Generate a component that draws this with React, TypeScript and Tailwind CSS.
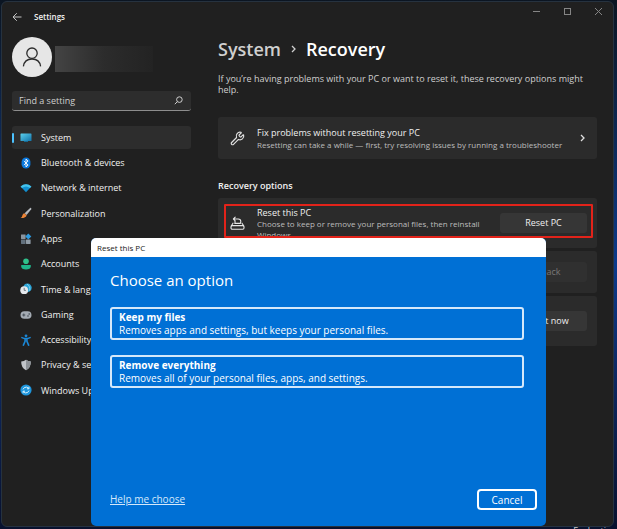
import { useState, type ReactNode } from 'react';
import { Wrench } from 'lucide-react';

const navItems: { label: string; icon: ReactNode }[] = [
  {
    label: 'System',
    icon: (
      <>
        <defs>
          <linearGradient id="sys" x1="0" y1="0" x2="1" y2="1">
            <stop offset="0" stopColor="#5cd0ee" />
            <stop offset="1" stopColor="#1273a8" />
          </linearGradient>
        </defs>
        <rect x="0.5" y="1.5" width="11" height="7.5" rx="0.6" fill="url(#sys)" />
        <path d="M4 9h4v1H4z" fill="#17678f" />
      </>
    ),
  },
  {
    label: 'Bluetooth & devices',
    icon: (
      <>
        <rect x="1.6" y="0.4" width="8.8" height="11.2" rx="4.4" fill="#0a78dd" />
        <path d="M3.9 4l4.2 4L6 9.9V2.1L8.1 4 3.9 8" fill="none" stroke="#fff" strokeWidth="0.9" />
      </>
    ),
  },
  {
    label: 'Network & internet',
    icon: (
      <>
        <path d="M0.6 4.6Q6 -0.2 11.4 4.6L6 10.2z" fill="#118fd0" />
        <path d="M0.6 4.6Q6 -0.2 11.4 4.6L10 6Q6 2.8 2 6z" fill="#46c3ea" />
      </>
    ),
  },
  {
    label: 'Personalization',
    icon: (
      <>
        <path d="M10.4 0.8Q11.8 0.8 11.2 2.2L6.6 8 4.6 6.2z" fill="#b4b8bd" />
        <path d="M4.4 6.2L6.6 8.2Q6 11.2 0.6 11 2.2 10.2 2.4 8.2 3 6.4 4.4 6.2z" fill="#ec8437" />
      </>
    ),
  },
  {
    label: 'Apps',
    icon: (
      <>
        <rect x="1" y="1.4" width="4.6" height="4.6" rx="0.4" fill="#8a949e" />
        <rect x="1" y="6.4" width="4.6" height="4.6" rx="0.4" fill="#62707d" />
        <rect x="6" y="6.4" width="4.6" height="4.6" rx="0.4" fill="#8f9ba6" />
        <path d="M8.3 0.4l3 3-3 3-3-3z" fill="#2d9be0" />
      </>
    ),
  },
  {
    label: 'Accounts',
    icon: (
      <>
        <circle cx="6" cy="3.3" r="2.8" fill="#2fc08b" />
        <path d="M1.2 7h9.6v1.4Q10.6 11.4 6 11.4T1.2 8.4z" fill="#1fb48a" />
      </>
    ),
  },
  {
    label: 'Time & language',
    icon: (
      <>
        <circle cx="7.4" cy="4.8" r="4.3" fill="#2ba5d8" />
        <path d="M7 1.2Q10.6 3 9.6 7.8" fill="none" stroke="#8fdcf4" strokeWidth="0.8" />
        <circle cx="4.2" cy="7.2" r="3.9" fill="#e4e8ec" />
        <path d="M4.2 4.8v2.6h1.7" fill="none" stroke="#53616c" strokeWidth="0.8" />
      </>
    ),
  },
  {
    label: 'Gaming',
    icon: (
      <>
        <rect x="0.5" y="2.2" width="11" height="7.6" rx="3.8" fill="#a4abb3" />
        <path d="M2.3 6h3M3.8 4.5v3" stroke="#3e464e" strokeWidth="0.9" />
        <circle cx="8" cy="7" r="0.8" fill="#3e464e" />
        <circle cx="9.2" cy="5" r="0.8" fill="#3e464e" />
      </>
    ),
  },
  {
    label: 'Accessibility',
    icon: (
      <g stroke="#1b87d6" fill="none" strokeLinecap="round" strokeLinejoin="round">
        <circle cx="6" cy="1.8" r="1.4" fill="#1b87d6" stroke="none" />
        <path d="M1.9 3.6Q6 5.4 10.1 3.6" strokeWidth="1.5" />
        <path d="M5.1 4.8v2.4L3.4 11.1M6.9 4.8v2.4l1.7 3.9" strokeWidth="1.6" />
      </g>
    ),
  },
  {
    label: 'Privacy & security',
    icon: (
      <>
        <path d="M6 0.8Q8 2.4 10.8 2.4 11 8.6 6 11.2 1 8.6 1.2 2.4 4 2.4 6 0.8z" fill="#c0c4c8" />
        <path d="M6 0.8Q8 2.4 10.8 2.4 11 8.6 6 11.2z" fill="#8d9297" />
      </>
    ),
  },
  {
    label: 'Windows Update',
    icon: (
      <>
        <circle cx="6" cy="6" r="5.6" fill="#1d95dc" />
        <path
          d="M3 5.4Q4 2.9 6.4 3.1 8 3.3 8.8 4.6M8.9 2.8v2H7M9 6.6Q8 9.1 5.6 8.9 4 8.7 3.2 7.4M3.1 9.2v-2H5"
          fill="none"
          stroke="#d8f2ff"
          strokeWidth="1"
        />
      </>
    ),
  },
];

const options = [
  { title: 'Keep my files', text: 'Removes apps and settings, but keeps your personal files.' },
  { title: 'Remove everything', text: 'Removes all of your personal files, apps, and settings.' },
];

function TitleBar() {
  return (
    <header className="flex h-[30px] items-center justify-between pr-[10px] pl-[10px]">
      <div className="flex items-center gap-3">
        <button aria-label="Back" className="text-[#c4c4c4]">
          <svg className="h-[10px] w-[10px]" viewBox="0 0 10 10" fill="none" stroke="currentColor">
            <path d="M9.5 5H1M4.8 1.2L1 5l3.8 3.8" />
          </svg>
        </button>
        <span className="text-[8px] font-semibold">Settings</span>
      </div>
      <div className="mb-3 flex gap-[22px] text-[#858585]">
        <button aria-label="Minimize">
          <svg className="h-[9px] w-[9px]" viewBox="0 0 9 9" fill="none" stroke="currentColor">
            <path d="M1 4.5h7" />
          </svg>
        </button>
        <button aria-label="Maximize">
          <svg className="h-[9px] w-[9px]" viewBox="0 0 9 9" fill="none" stroke="currentColor">
            <rect x="1.5" y="1.5" width="6" height="6" />
          </svg>
        </button>
        <button aria-label="Close">
          <svg className="h-[9px] w-[9px]" viewBox="0 0 9 9" fill="none" stroke="currentColor">
            <path d="M1 1l7 7M8 1L1 8" />
          </svg>
        </button>
      </div>
    </header>
  );
}

function Sidebar() {
  const [active, setActive] = useState('System');

  return (
    <aside className="w-[179px] shrink-0 pt-[5px]">
      <div className="flex items-center gap-[3px]">
        <div className="flex h-10 w-10 items-center justify-center rounded-full bg-[#e6e6e6]">
          <svg className="h-5 w-5" viewBox="0 0 20 20" fill="none" stroke="#2b2b2b" strokeWidth="1.3">
            <circle cx="10" cy="6.2" r="5.2" />
            <path d="M1.4 19.4Q2.4 12 10 12t8.6 7.4" />
          </svg>
        </div>
        <div className="mt-1 h-[26px] w-[98px] bg-linear-to-r from-[#444] via-[#2c2c2c] to-[#232323]" />
      </div>

      <div className="mt-[14px] flex h-5 items-center rounded-[3px] border-b border-[#8d8d8d] bg-[#2d2d2d] pr-2 pl-[7px]">
        <input
          type="text"
          aria-label="Find a setting"
          placeholder="Find a setting"
          className="min-w-0 flex-1 bg-transparent text-[9px] outline-none placeholder:text-[#cfcfcf]"
        />
        <svg className="h-[9px] w-[9px]" viewBox="0 0 9 9" fill="none" stroke="#cfcfcf">
          <circle cx="5.4" cy="3.6" r="2.8" />
          <path d="M3.4 5.6L0.8 8.2" />
        </svg>
      </div>

      <nav className="mt-[15px] flex h-[276px] flex-col justify-between">
        {navItems.map((item) => (
          <button
            key={item.label}
            onClick={() => setActive(item.label)}
            className={`flex h-[23px] items-center rounded-[3px] text-left text-[9px] whitespace-nowrap ${
              item.label === active ? 'bg-[#2d2d2d]' : ''
            }`}
          >
            <span className={`mr-[6px] h-[10px] w-[2px] rounded-full ${item.label === active ? 'bg-[#4cc2ff]' : ''}`} />
            <svg className="mr-[9px] h-3 w-3" viewBox="0 0 12 12">
              {item.icon}
            </svg>
            {item.label}
          </button>
        ))}
      </nav>
    </aside>
  );
}

function Content() {
  return (
    <main className="min-w-0 flex-1 pt-[5px]">
      <h1 className="flex items-center text-[18px] leading-6 font-semibold">
        <span className="text-[#cfcfcf]">System</span>
        <svg className="mx-[10px] h-2 w-[5px]" viewBox="0 0 5 8" fill="none" stroke="#cfcfcf" strokeWidth="1.3">
          <path d="M1 1l3 3-3 3" />
        </svg>
        <span className="text-white">Recovery</span>
      </h1>
      <p className="mt-3 text-[9px] leading-[11px] text-[#cfcfcf]">
        If you&rsquo;re having problems with your PC or want to reset it, these recovery options might help.
      </p>

      <button className="mt-[22px] flex h-[42px] w-full items-center rounded-[3px] bg-[#2b2b2b] px-3 text-left">
        <Wrench className="mr-3 h-[15px] w-[15px] text-[#e0e0e0]" strokeWidth={1.9} />
        <span className="flex-1">
          <span className="block text-[9px] leading-[12px]">Fix problems without resetting your PC</span>
          <span className="block text-[8px] leading-[11px] text-[#bdbdbd]">
            Resetting can take a while &mdash; first, try resolving issues by running a troubleshooter
          </span>
        </span>
        <svg className="h-2 w-[5px]" viewBox="0 0 5 8" fill="none" stroke="#e0e0e0" strokeWidth="1.3">
          <path d="M1 1l3 3-3 3" />
        </svg>
      </button>

      <h2 className="mt-[21px] text-[9px] leading-3 font-semibold">Recovery options</h2>

      <div className="mt-[6px] space-y-[3px]">
        <div className="relative flex h-[50px] items-center rounded-[3px] bg-[#2b2b2b] pr-[10px] pl-3">
          <svg
            className="mr-3 h-[15px] w-[15px]"
            viewBox="0 0 15 15"
            fill="none"
            stroke="#e6e6e6"
            strokeWidth="1.1"
            strokeLinecap="round"
            strokeLinejoin="round"
          >
            <rect x="1" y="9.6" width="13" height="3.6" rx="1.2" />
            <path d="M1.4 9.8L3 7.2M13.6 9.8L12 7.2" />
            <path d="M4.8 7.4h5.6M3.4 3h4.8Q10.8 3.2 10.8 5.4 10.8 6.6 10 7.4M5.2 1.2L3.4 3l1.8 1.8M5 4.8v2.4" />
          </svg>
          <div className="flex-1 pt-px">
            <h3 className="text-[9px] leading-[11px]">Reset this PC</h3>
            <p className="text-[8px] leading-[11px] text-[#bdbdbd]">
              Choose to keep or remove your personal files, then reinstall Windows
            </p>
          </div>
          <button className="ml-5 h-5 w-[87px] rounded-[3px] bg-[#363636] text-[9px]">Reset PC</button>
          <div className="pointer-events-none absolute top-[6px] right-1 bottom-[10px] left-[6px] rounded-[1px] border-2 border-[#e2231a]" />
        </div>
        <div className="flex h-[42px] items-center justify-end rounded-[3px] bg-[#2b2b2b] pr-[10px]">
          <button disabled className="h-5 w-[87px] rounded-[3px] bg-[#303030] text-[9px] text-[#777]">
            Go back
          </button>
        </div>
        <div className="flex h-[50px] items-center justify-end rounded-[3px] bg-[#2b2b2b] pr-[10px]">
          <button className="h-5 w-[87px] rounded-[3px] bg-[#363636] text-[9px]">Restart now</button>
        </div>
      </div>
    </main>
  );
}

function ResetDialog() {
  return (
    <section
      role="dialog"
      aria-labelledby="dialog-title"
      className="absolute top-[238px] right-[71px] bottom-[3px] left-[91px] flex flex-col overflow-hidden rounded-[5px] bg-[#0070d5] text-white"
    >
      <h2 id="dialog-title" className="bg-white px-[6px] text-[8px] leading-[19px] text-[#222]">
        Reset this PC
      </h2>
      <div className="flex flex-1 flex-col pt-[13px] pr-[9px] pb-4 pl-[19px]">
        <h3 className="text-[15px] leading-5">Choose an option</h3>
        <div className="mt-[17px] mr-[13px] space-y-[15px]">
          {options.map((option) => (
            <button
              key={option.title}
              className="block h-[33px] w-full rounded-[3px] border-2 border-[#d5e8fa] px-[7px] text-left text-[10px] leading-[13px]"
            >
              <span className="block font-bold">{option.title}</span>
              <span className="block">{option.text}</span>
            </button>
          ))}
        </div>
        <div className="mt-auto flex items-center justify-between">
          <a href="#help" className="text-[10px] text-[#d5e8fa] underline">
            Help me choose
          </a>
          <button className="h-[21px] w-[60px] rounded-[4px] border-2 border-white text-[10px] leading-none">Cancel</button>
        </div>
      </div>
    </section>
  );
}

export default function App() {
  return (
    <div className="relative flex min-h-screen flex-col overflow-hidden bg-linear-to-b from-[#0b1522] via-[#0b3a8b] to-[#08112e] pt-px pr-[3px] pb-[2px] pl-px font-['Open_Sans','Noto_Sans',sans-serif] text-[#f0f0f0]">
      <div className="flex flex-1 flex-col rounded-[6px] border border-[#26323f] bg-[#202020]">
        <TitleBar />
        <div className="flex flex-1 gap-[27px] pr-4 pl-[10px]">
          <Sidebar />
          <Content />
        </div>
      </div>
      <p className="absolute top-full right-0 -mt-[3px] text-[9px] leading-[9px] text-[#c8c8c8]">Evaluation</p>
      <ResetDialog />
    </div>
  );
}
